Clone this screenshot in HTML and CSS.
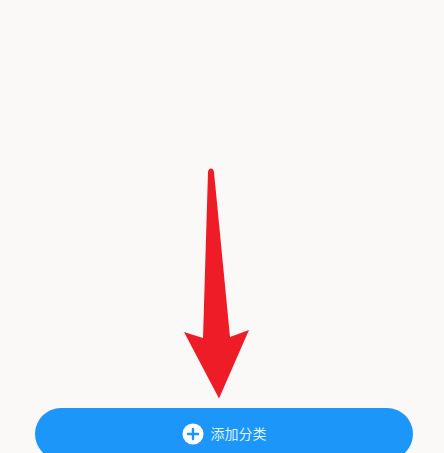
FILE: index.html
```html
<!DOCTYPE html>
<html lang="zh-CN">
<head>
  <meta charset="UTF-8">
  <meta name="viewport" content="width=device-width, initial-scale=1.0">
  <title>添加分类</title>
  <link rel="stylesheet" href="styles.css">
</head>

<body>
  <div class="page">
    <button type="button" class="add-button">
      <svg class="plus-icon" viewBox="0 0 22 22" aria-hidden="true">
        <circle cx="11" cy="11" r="10.500" fill="#fff"/>
        <path d="M11 6v10M6 11h10" stroke="#1c96f8" stroke-width="2.400" stroke-linecap="round"/>
      </svg>
      <span class="add-label">添加分类</span>
    </button>

    <!-- Red arrow drawn over the screenshot -->
    <svg class="arrow" viewBox="0 0 444 453" aria-hidden="true">
      <path d="M208 172Q208.500 168.500 211 168.500Q213.500 168.500 214 172L230 337L249 330L219 398.500L184 332L203 338Z" fill="#ee1c27"/>
    </svg>
  </div>
</body>
</html>
```

FILE: styles.css
```css
html, body {
  margin: 0;
  padding: 0;
}

body {
  background-color: #fbf9f7;
  font-family: "Noto Sans CJK SC", "Liberation Sans", sans-serif;
}

.page {
  position: relative;
  display: flex;
  flex-direction: column;
  justify-content: flex-end;
  align-items: flex-start;
  width: 444px;
  height: 453px;
  overflow: hidden;
}

.add-button {
  display: flex;
  justify-content: center;
  align-items: center;
  gap: 7px;
  flex-shrink: 0;
  width: 378px;
  height: 52px;
  margin: 0 0 -7px 35px;
  padding: 0;
  background-color: #1c96f8;
  color: #dff0fe;
  border: none;
  border-radius: 26px;
  font-family: inherit;
  font-size: 14px;
}

.add-label {
  padding-bottom: 2px;
}

.plus-icon {
  width: 22px;
  height: 22px;
}

.arrow {
  position: absolute;
  top: 0;
  left: 0;
  width: 444px;
  height: 453px;
}
```
